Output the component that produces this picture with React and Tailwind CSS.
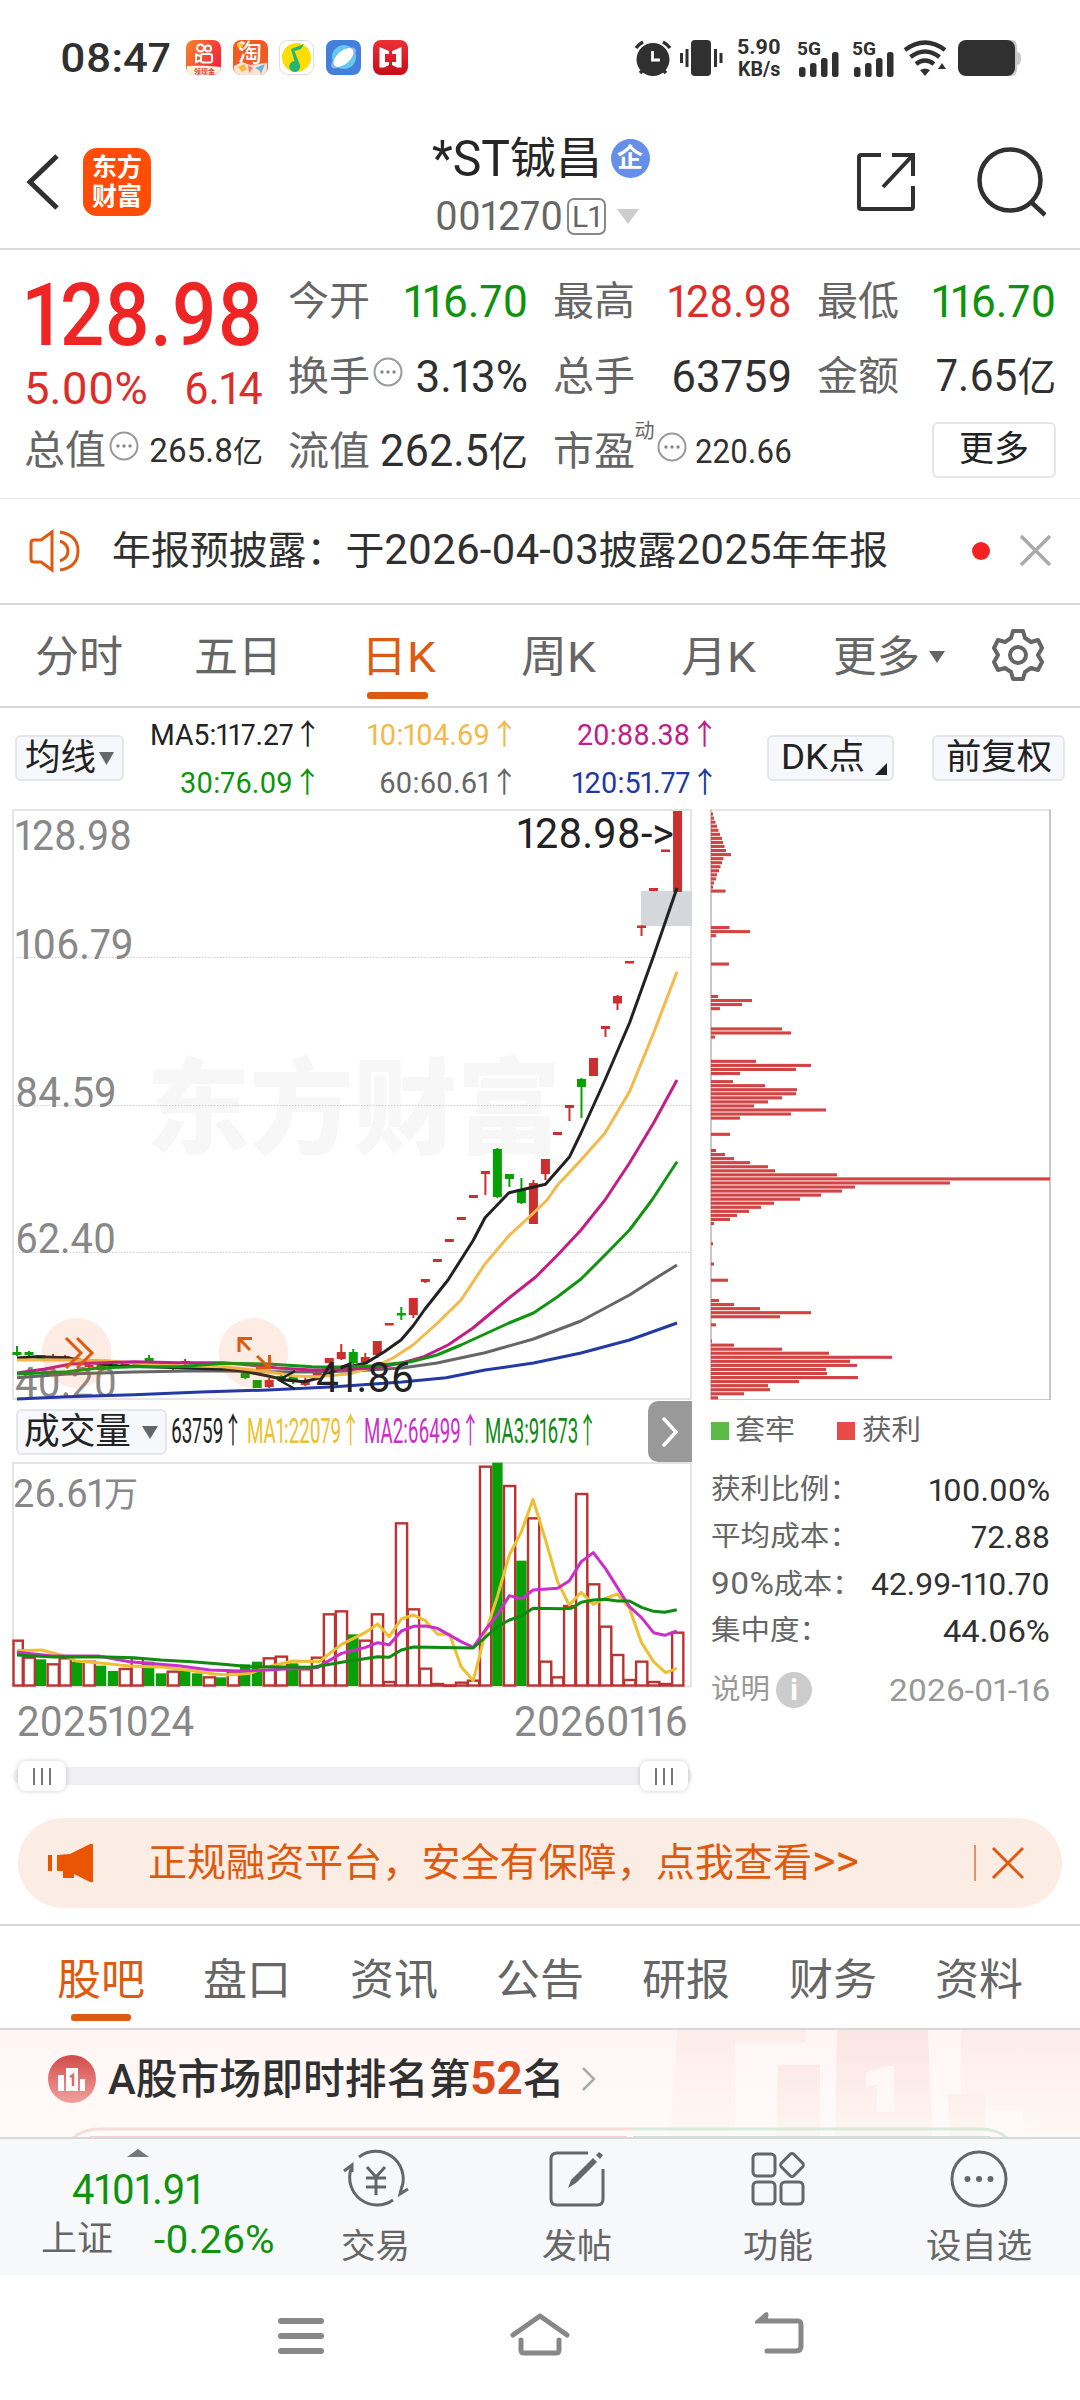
import { useLayoutEffect, useRef } from "react";

// one line of text squeezed or stretched to the given width
function Fit({ w, className = "", children }) {
  const ref = useRef(null);
  useLayoutEffect(() => {
    const el = ref.current;
    el.style.transform = `scaleX(${w / el.offsetWidth})`;
  }, [w, children]);
  return (
    <span className={`inline-block shrink-0 whitespace-nowrap ${className}`} style={{ width: w }}>
      <span ref={ref} className="inline-block origin-left">{children}</span>
    </span>
  );
}

const line = (points) => points.map((p) => p.join(",")).join(" ");

function StatusBar() {
  return (
    <div className="status h-[116px] flex items-center justify-between pl-[60px] pr-[58px]">
      <div className="flex items-center">
        <Fit w={111} className="text-[41px] leading-[50px] font-medium text-[#303030]">08:47</Fit>
        <svg className="ml-[15px] w-[222px] h-[35px]" viewBox="0 0 222 35">
          <defs>
            <linearGradient id="kwai" x1="0" x2="1" y2="0.5"><stop stopColor="#f8862c" /><stop offset="1" stopColor="#f4293c" /></linearGradient>
            <linearGradient id="hong" x2="0" y2="1"><stop stopColor="#ee2f38" /><stop offset="1" stopColor="#c80d18" /></linearGradient>
          </defs>
          <rect width="35" height="35" rx="8" fill="url(#kwai)" />
          <path d="M1 26 Q17 25 35 27 Q34 35 27 35 H8 Q2 35 1 30Z" fill="#fff3e2" />
          <text x="8" y="33.500" fontSize="7" fontWeight="700" fill="#e8432c">领现金</text>
          <g fill="none" stroke="#fff" strokeWidth="2"><circle cx="14.500" cy="8" r="3.500" /><circle cx="22" cy="8.500" r="3" /><rect x="15" y="14" width="11" height="8.500" rx="2" /><path d="M14 16 L10 14.500 V22 L14 20.500" /></g>
          <g transform="translate(47)">
            <rect width="35" height="35" rx="8" fill="#f15a22" />
            <circle cx="7" cy="5" r="3" fill="#ffc830" />
            <text x="5" y="21" fontSize="24" fontWeight="500" fill="#fff">淘</text>
            <path d="M1 26 L9 22 L17 25 L34 23 V28 Q34 35 27 35 H8 Q1 35 1 28Z" fill="#fbe5d2" />
            <path d="M5 27 L11 24 L14 29 L9 32Z" fill="#f6b93e" /><path d="M15 25 L20 28 L16 33Z" fill="#ef8078" /><path d="M22 28 L32 24 L28 34 L26 30Z" fill="#67b4e6" />
          </g>
          <g transform="translate(93)">
            <rect x=".5" y=".5" width="34" height="34" rx="8" fill="#fff" stroke="#dcdcdc" />
            <circle cx="17.500" cy="17.500" r="14.500" fill="#fedd05" />
            <path d="M12 9 L25 4 L22 9 L15.500 11 L21 25 A5.500 5.500 0 1 1 15.500 21Z" fill="#22b573" />
          </g>
          <g transform="translate(140)">
            <rect width="35" height="35" rx="8" fill="#457fdc" />
            <circle cx="18" cy="17" r="12" fill="#64c8f0" />
            <ellipse cx="17.500" cy="18" rx="15" ry="6" fill="#8fb6ee" transform="rotate(-38 17.500 18)" />
            <ellipse cx="17.500" cy="17.500" rx="12" ry="6.500" fill="#fff" transform="rotate(-42 17.500 17.500)" />
          </g>
          <g transform="translate(187)">
            <rect width="35" height="35" rx="8" fill="url(#hong)" />
            <path d="M6.500 7 L16 11 V14 H12 V22 H16 V25 L11 27.500 H6.500Z M28.500 7 L19 11 V14 H23 V22 H19 V25 L24 27.500 H28.500Z" fill="#fff" />
          </g>
        </svg>
      </div>
      <div className="flex items-center text-[#303030]">
        <svg className="w-[90px] h-[38px]" viewBox="0 0 90 38" fill="currentColor">
          <circle cx="19" cy="20.500" r="16.500" />
          <path d="M6 34 L10 30 M32 34 L28 30 M2 9 Q5 5 9 3 M36 9 Q33 5 29 3" stroke="currentColor" strokeWidth="3.500" />
          <path d="M18.500 12 V21 H26" stroke="#fff" strokeWidth="2.800" fill="none" />
          <rect x="57" y="1" width="20" height="36" rx="4" />
          <path d="M47.500 14 V24 M53 10 V28 M81.500 10 V28 M87 14 V24" stroke="currentColor" strokeWidth="3" />
        </svg>
        <div className="ml-[13px] mr-[4px] w-[44px] flex flex-col items-center text-[21px] leading-[22px] font-bold">
          <Fit w={44}>5.90</Fit>
          <Fit w={42}>KB/s</Fit>
        </div>
        {[0, 1].map((i) => (
          <svg key={i} className="ml-[12px] w-[43px] h-[38px] overflow-visible" viewBox="0 0 43 38" fill="currentColor">
            <text x="0" y="16" fontSize="19" fontWeight="700" textLength="24" lengthAdjust="spacingAndGlyphs">5G</text>
            <rect x="2" y="28" width="6.500" height="10" rx="2.500" /><rect x="13" y="24" width="6.500" height="14" rx="2.500" /><rect x="24" y="19" width="6.500" height="19" rx="2.500" /><rect x="35" y="13" width="6.500" height="25" rx="2.500" />
          </svg>
        ))}
        <svg className="ml-[8px] w-[44px] h-[38px]" viewBox="0 0 44 38" fill="none" stroke="currentColor" strokeWidth="4.500">
          <path d="M2 11 Q22 -4 42 11 M7.500 18 Q22 7 36.500 18 M13 25 Q22 18 31 25" />
          <path d="M17 31 Q22 28 27 31 L22 37Z M35 30 L39 24 L43 30Z" fill="currentColor" stroke="none" />
        </svg>
        <svg className="ml-[11px] w-[64px] h-[38px]" viewBox="0 0 64 38">
          <path d="M40 1 H54 Q59 2 59 8 V13 L62 14 Q64 19 62 25 L59 26 V30 Q59 36 54 37 H40Z" fill="#c8c8c8" />
          <rect y="1" width="57" height="36" rx="8" fill="#303030" />
        </svg>
      </div>
    </div>
  );
}

function Header() {
  return (
    <div className="header h-[134px] flex items-center justify-between border-b-2 border-[#dcdcdc] pl-[26px] pr-[34px]">
      <div className="flex items-center w-[300px]">
        <svg className="w-[34px] h-[56px]" viewBox="0 0 34 56" fill="none" stroke="#303030" strokeWidth="5"><path d="M31 2 L4 28 L31 54" /></svg>
        <div className="ml-[23px] w-[68px] h-[68px] rounded-[14px] bg-[#ff4c06] text-white font-bold text-[25px] leading-[29px] flex flex-col items-center justify-center">
          <span>东方</span>
          <span>财富</span>
        </div>
      </div>
      <div className="flex flex-col items-center h-full pt-[15px]">
        <div className="flex items-center h-[56px] ml-[9px]">
          <Fit w={78} className="text-[50px] leading-[56px] text-[#262626]">*ST</Fit>
          <Fit w={92} className="text-[44px] leading-[56px] text-[#262626]">铖昌</Fit>
          <span className="ml-[9px] w-[39px] h-[39px] rounded-full bg-[#668fea] text-white font-bold text-[26px] leading-[38px] text-center">企</span>
        </div>
        <div className="flex items-center h-[56px] ml-[3px] mt-[2px] text-[#666]">
          <Fit w={128} className="text-[40px] leading-[44px]">001270</Fit>
          <span className="ml-[4px] w-[39px] h-[37px] rounded-[7px] border-2 border-[#888] text-[29px] leading-[34px] flex justify-center"><Fit w={29}>L1</Fit></span>
          <svg className="ml-[10px] w-[24px] h-[16px]" viewBox="0 0 24 16"><path d="M1 0 H23 L12 15Z" fill="#ccc" /></svg>
        </div>
      </div>
      <div className="flex items-center justify-end w-[300px] gap-[60px]">
        <svg className="w-[60px] h-[60px]" viewBox="0 0 60 60" fill="none" stroke="#303030" strokeWidth="4"><path d="M25 3 H5 Q3 3 3 5 V55 Q3 57 5 57 H55 Q57 57 57 55 V34 M36 3 H57 V24 M57 3 L27 35" /></svg>
        <svg className="w-[70px] h-[70px]" viewBox="0 0 70 70" fill="none" stroke="#303030" strokeWidth="4.500"><circle cx="34" cy="33" r="30.500" /><path d="M54 54 L69 68" /></svg>
      </div>
    </div>
  );
}

function Dots() {
  return (
    <svg className="w-[30px] h-[30px] -mt-[10px] ml-[3px]" viewBox="0 0 30 30">
      <circle cx="15" cy="15" r="13.500" fill="none" stroke="#999" strokeWidth="2" />
      <g fill="#888"><circle cx="9" cy="15" r="1.700" /><circle cx="15" cy="15" r="1.700" /><circle cx="21" cy="15" r="1.700" /></g>
    </svg>
  );
}

function Quote({ name, value, w, color = "text-[#303030]", size = "text-[44px]", dots, sup }) {
  return (
    <div className="h-[75px] flex items-center justify-between">
      <div className="flex items-center">
        <Fit w={82} className="text-[40px] leading-[50px] text-[#666]">{name}</Fit>
        {sup && <span className="-mt-[42px] text-[20px] leading-[22px] text-[#666] -mr-[1px]">{sup}</span>}
        {dots && <Dots />}
      </div>
      <Fit w={w} className={`leading-[50px] ${size} ${color}`}>{value}</Fit>
    </div>
  );
}

function QuotePanel() {
  return (
    <div className="quotes h-[249px] border-b border-[#e8e8e8] grid grid-cols-4 gap-x-[25px] px-[24px]">
      <div className="pt-[20px]">
        <Fit w={239} className="text-[87px] h-[88px] leading-[90px] font-medium text-[#ee2524]">128.98</Fit>
        <div className="h-[62px] flex items-center justify-between text-[44px] leading-[50px] text-[#dc2d2b]">
          <Fit w={124}>5.00%</Fit>
          <Fit w={79}>6.14</Fit>
        </div>
        <div className="-mt-[6px]">
          <Quote name="总值" value={<>265.8<span className="text-[30px]">亿</span></>} w={114} size="text-[33px]" dots />
        </div>
      </div>
      <div className="pt-[15px]">
        <Quote name="今开" value="116.70" w={124} color="text-[#0f930f]" />
        <Quote name="换手" value="3.13%" w={112} dots />
        <Quote name="流值" value={<>262.5<span className="text-[40px]">亿</span></>} w={148} />
      </div>
      <div className="pt-[15px]">
        <Quote name="最高" value="128.98" w={124} color="text-[#dc2d2b]" />
        <Quote name="总手" value="63759" w={121} />
        <Quote name="市盈" value="220.66" w={97} size="text-[33px]" sup="动" dots />
      </div>
      <div className="pt-[15px]">
        <Quote name="最低" value="116.70" w={124} color="text-[#0f930f]" />
        <Quote name="金额" value={<>7.65<span className="text-[40px]">亿</span></>} w={120} />
        <div className="h-[70px] flex items-center justify-end">
          <div className="w-[124px] h-[56px] rounded-md border-2 border-[#e6e6e6] text-[35px] leading-[52px] text-center text-[#222]">更多</div>
        </div>
      </div>
    </div>
  );
}

function Notice() {
  return (
    <div className="notice h-[106px] flex items-center border-b-2 border-[#d8d8d8] pl-[29px] pr-[29px]">
      <svg className="w-[52px] h-[44px]" viewBox="0 0 52 44" fill="none" stroke="#dd5a10" strokeWidth="3"><path d="M23 3 V41 L12 33 H5 Q2 33 2 30 V14 Q2 11 5 11 H12 Z M31 12 Q39 15 39 22 Q39 29 31 32 M31 3 Q49 6 49 22 Q49 38 31 41" /></svg>
      <Fit w={776} className="ml-[31px] text-[39px] leading-[54px] text-[#303030]">
        年报预披露：于<span className="text-[42px]">2026-04-03</span>披露<span className="text-[42px]">2025</span>年年报
      </Fit>
      <span className="ml-auto w-[18px] h-[18px] rounded-full bg-[#f32323]"></span>
      <svg className="ml-[30px] w-[31px] h-[31px]" viewBox="0 0 31 31" stroke="#aaa" strokeWidth="3.500"><path d="M1 1 L30 30 M30 1 L1 30" /></svg>
    </div>
  );
}

function PeriodTabs() {
  return (
    <div className="tabs h-[104px] flex items-center border-b-2 border-[#d8d8d8] pt-[3px] text-[43px] leading-[56px] text-[#666]">
      <Fit w={88} className="ml-[35px]">分时</Fit>
      <Fit w={88} className="ml-[71px]">五日</Fit>
      <div className="relative ml-[79px] text-[#dd5a10]">
        <Fit w={75}>日K</Fit>
        <span className="absolute left-[6px] top-[63px] w-[61px] h-[7px] rounded-[3px] bg-[#dd5a10]"></span>
      </div>
      <Fit w={75} className="ml-[85px]">周K</Fit>
      <Fit w={75} className="ml-[85px]">月K</Fit>
      <Fit w={87} className="ml-[77px]">更多</Fit>
      <svg className="ml-[9px] w-[16px] h-[12px]" viewBox="0 0 16 12"><path d="M0 0 H16 L8 12Z" fill="#666" /></svg>
      <svg className="ml-[46px] -mt-[3px] w-[54px] h-[54px]" viewBox="0 0 54 54" fill="none" stroke="#666" strokeWidth="4" strokeLinejoin="round">
        <path d="M22 3 H32 L34 10 L40 14 L47 12 L51 20 L47 27 L51 34 L47 42 L40 40 L34 44 L32 51 H22 L20 44 L14 40 L7 42 L3 34 L7 27 L3 20 L7 12 L14 14 L20 10Z" />
        <circle cx="27" cy="27" r="8" />
      </svg>
    </div>
  );
}

function Averages() {
  return (
    <div className="averages h-[100px] flex items-center pl-[15px] pr-[15px]">
      <div className="w-[109px] h-[46px] rounded-md border-2 border-[#e4e6ea] bg-[#f6f8fb] flex items-center pl-[8px] text-[36px] leading-[42px] text-[#222]">
        <Fit w={71}>均线</Fit>
        <svg className="ml-[3px] w-[15px] h-[13px]" viewBox="0 0 15 13"><path d="M0 0 H15 L7.500 13Z" fill="#666" /></svg>
      </div>
      <div className="ml-[29px] w-[567px] grid grid-cols-[169px_197px_200px] justify-items-end text-[29px] leading-[48px] mt-[2px]">
        <Fit w={172} className="text-[#222]">MA5:117.27↑</Fit>
        <Fit w={152} className="text-[#f3b94a]">10:104.69↑</Fit>
        <Fit w={142} className="text-[#c31d86]">20:88.38↑</Fit>
        <Fit w={142} className="text-[#0f930f]">30:76.09↑</Fit>
        <Fit w={140} className="text-[#666]">60:60.61↑</Fit>
        <Fit w={147} className="text-[#21399f]">120:51.77↑</Fit>
      </div>
      <div className="relative ml-auto w-[127px] h-[46px] rounded-md border-2 border-[#e4e6ea] bg-[#f6f8fb] text-[35px] leading-[42px] pl-[12px] text-[#222]">
        <Fit w={84}>DK点</Fit>
        <svg className="absolute right-[5px] bottom-[4px] w-[12px] h-[12px]" viewBox="0 0 12 12"><path d="M12 0 V12 H0Z" fill="#222" /></svg>
      </div>
      <div className="ml-[38px] w-[133px] h-[46px] rounded-md border-2 border-[#e4e6ea] bg-[#f6f8fb] text-[35px] leading-[42px] text-center text-[#222]"><Fit w={106}>前复权</Fit></div>
    </div>
  );
}

const RED = "#cb2f2e";
const GREEN = "#07a007";
const barX = (i) => 17 + i * 12.01;

// [index, color, body top, body bottom, wick top, wick bottom]
const candles = [
  [0, GREEN, 1352, 1355, 1346, 1356], [1, GREEN, 1352, 1355, 1351, 1356], [2, GREEN, 1355, 1359], [3, RED, 1356, 1358, 1354, 1360], [4, RED, 1356, 1358, 1355, 1359],
  [5, GREEN, 1359, 1361], [6, RED, 1365, 1367, 1363, 1369], [7, GREEN, 1365, 1370], [8, GREEN, 1364, 1367], [9, RED, 1363, 1365], [10, GREEN, 1363, 1365],
  [11, GREEN, 1358, 1361, 1355, 1362], [12, GREEN, 1363, 1366], [13, RED, 1366, 1368, 1364, 1370], [14, RED, 1361, 1363, 1359, 1365], [15, GREEN, 1366, 1369],
  [16, GREEN, 1367, 1369], [17, RED, 1368, 1370], [18, GREEN, 1368, 1370], [19, GREEN, 1371, 1378, 1370, 1379], [20, GREEN, 1380, 1388], [21, RED, 1380, 1387, 1378, 1388],
  [22, GREEN, 1376, 1378, 1373, 1380], [23, GREEN, 1376, 1382, 1375, 1384], [24, RED, 1380, 1385, 1377, 1386], [25, RED, 1373, 1377], [26, RED, 1358, 1363],
  [27, RED, 1352, 1359, 1344, 1360], [28, GREEN, 1352, 1363, 1349, 1364], [29, RED, 1357, 1362, 1353, 1362], [30, RED, 1341, 1355, 1341, 1358], [31, RED, 1323, 1325.5],
  [32, GREEN, 1313, 1315.5, 1307, 1320], [33, RED, 1298, 1315, 1298, 1318], [34, RED, 1279, 1282, 1279, 1283], [35, RED, 1259, 1262], [36, RED, 1239, 1242], [37, RED, 1217, 1220],
  [38, RED, 1195, 1198], [39, RED, 1171, 1174, 1171, 1195], [40, GREEN, 1149, 1197, 1148, 1198], [41, GREEN, 1174, 1179, 1174, 1187], [42, GREEN, 1189, 1203, 1178, 1204],
  [43, RED, 1183, 1224, 1180, 1224], [44, RED, 1159, 1174, 1159, 1180], [45, RED, 1132, 1135], [46, RED, 1105, 1108, 1105, 1121], [47, GREEN, 1079, 1087, 1078, 1118],
  [48, RED, 1058, 1076], [49, RED, 1026, 1029, 1026, 1037], [50, RED, 996, 1003.5, 995, 1010], [51, RED, 961, 963.5], [52, RED, 925.5, 928, 925.5, 936],
  [53, RED, 888, 891], [54, RED, 849.5, 852], [55, RED, 811, 892],
];

const averages = [
  ["#2439a4", [[17, 1399], [67, 1396.7], [134, 1394.7], [201, 1392], [268, 1390], [335, 1386.7], [402, 1382], [446, 1377.7], [485, 1370], [533.5, 1363], [581, 1353], [629.5, 1340], [677, 1323]]],
  ["#666", [[17, 1377.7], [67, 1374], [134, 1372], [201, 1370.7], [268, 1371.7], [312, 1372], [357, 1370.7], [402, 1368], [437, 1363], [485, 1352.7], [533.5, 1339], [581, 1321], [629.5, 1295], [656, 1278], [677, 1265]]],
  ["#222", [[17, 1358], [36, 1356.7], [67, 1357.7], [89, 1361.7], [112, 1365.7], [149, 1366.7], [179, 1367.7], [223, 1369.3], [243, 1371], [268, 1376], [286, 1380], [304, 1381.7], [319, 1378], [339, 1369], [366, 1363], [384, 1352], [401, 1340], [413, 1326], [425, 1309], [448, 1280], [473, 1240.7], [485, 1217.7], [502, 1200], [509, 1192.7], [545.5, 1184.3], [569.6, 1156.7], [581, 1133], [605, 1080], [629.5, 1023], [653.6, 956], [677, 888]]],
  ["#f3b94a", [[17, 1360], [67, 1360], [107, 1360.7], [134, 1363], [179, 1365.7], [223, 1366.7], [268, 1371.7], [295, 1376], [317, 1376.7], [348, 1374], [375, 1366.7], [393, 1358], [413, 1345], [437.5, 1323], [461, 1300], [485, 1264], [509, 1235.7], [533.5, 1213], [547, 1200], [557.6, 1185], [581, 1160], [605, 1133], [629.5, 1091.7], [653.6, 1033], [677, 971.7]]],
  ["#c31d86", [[17, 1373], [45, 1369], [71, 1364], [103, 1362.7], [134, 1361.7], [179, 1362.7], [223, 1362.7], [250, 1365], [277, 1368], [312, 1370], [348, 1369], [375, 1368], [402, 1363], [424, 1356.7], [448, 1345], [473, 1328], [509, 1298], [536, 1276.7], [557.6, 1255], [581, 1230], [605, 1200], [629.5, 1163], [653.6, 1123], [677, 1080]]],
  ["#119411", [[17, 1374], [67, 1371.7], [98, 1368], [134, 1366.7], [179, 1366.7], [223, 1363.3], [268, 1364], [312, 1366.7], [339, 1367], [375, 1365.7], [411, 1361.7], [437, 1355], [461, 1345], [485, 1334], [509, 1323], [533.5, 1313], [557.6, 1296.7], [581, 1279], [605, 1255], [629.5, 1230], [652, 1200], [677, 1161.7]]],
];

const priceLabels = [["128.98", 850, 117], ["106.79", 959, 119], ["84.59", 1107, 102], ["62.40", 1253, 101], ["40.20", 1397, 102]];

function KLine() {
  return (
    <svg className="block w-[679px] h-[592px] overflow-visible" viewBox="13 809 679 592">
      <text x="146" y="1146" fontSize="104" fontWeight="900" fill="#f7f7f7" textLength="415">东方财富</text>
      <path d="M13 957.500 H691 M13 1105.500 H691 M13 1252.500 H691" stroke="#cfcfcf" strokeDasharray="1.500 1.500" />
      <rect x="13" y="810" width="678" height="589" fill="none" stroke="#e4e4e4" strokeWidth="2" />
      <rect x="641" y="891" width="51" height="35" fill="#d4d8dd" />
      <g fontSize="42" fill="#888">
        {priceLabels.map(([label, y, w]) => (
          <text key={label} x="15" y={y} textLength={w} lengthAdjust="spacingAndGlyphs">{label}</text>
        ))}
      </g>
      {candles.map(([i, color, top, bottom, high, low]) => (
        <g key={i} fill={color}>
          <rect x={barX(i) - 4.5} y={top} width="9" height={bottom - top} />
          {high && <rect x={barX(i) - 1} y={high} width="2" height={low - high} />}
        </g>
      ))}
      {averages.map(([color, points]) => (
        <polyline key={color} points={line(points)} fill="none" stroke={color} strokeWidth="3" strokeLinejoin="round" />
      ))}
      <g fill="#222" fontSize="42">
        <text x="517" y="848" textLength="157" lengthAdjust="spacingAndGlyphs">128.98-&gt;</text>
        <text x="316" y="1392" textLength="98" lengthAdjust="spacingAndGlyphs">41.86</text>
      </g>
      <path d="M295 1371 L279 1380 L295 1389 M279 1380 H291" fill="none" stroke="#222" strokeWidth="2.500" />
      <circle cx="76.500" cy="1353" r="35" fill="#f06a28" fillOpacity=".13" />
      <circle cx="253.500" cy="1353" r="35" fill="#f06a28" fillOpacity=".13" />
      <g fill="none" stroke="#dd5a10" strokeWidth="3">
        <path d="M66 1338 L81 1353 L66 1368 M77 1338 L92 1353 L77 1368" />
        <path d="M239 1352 V1338.500 H252 M239 1338.500 L250 1350 M269.500 1355 V1368 H256 M269.500 1368 L257 1356" />
      </g>
    </svg>
  );
}

// bar tops measured on the plot's own 3x grid, base at 858
const volumes = [
  722, 773, -778, 793, 775, -785, 785, -797, -813, 807, 775, -785, -820, 815, -812, -820, 832, -832, 815, -793, -785, 775, 770, -790, 808, 773, 643, 634,
  -703, 722, 643, 846, 370, 628, 806, 852, 856, 848, 842, 200, -188, 258, -482, 355, 785, 832, 618, 282, 553, 680, 765, 840, 785, 846, 852, 698,
];
const volumeLines = [
  ["#ecc02e", [[38, 752], [93, 750], [150, 770], [170, 783], [230, 790], [290, 798], [370, 802], [430, 812], [480, 822], [515, 825], [560, 820], [600, 800], [657, 783], [715, 785], [765, 733], [819, 697], [846, 672], [872, 710], [899, 657], [926, 645], [953, 662], [980, 703], [1007, 703], [1033, 800], [1060, 842], [1087, 700], [1114, 590], [1141, 465], [1168, 395], [1194, 298], [1222, 420], [1249, 545], [1275, 615], [1302, 577], [1329, 613], [1356, 595], [1383, 582], [1410, 625], [1437, 728], [1464, 785], [1491, 818], [1516, 805]]],
  ["#cb2fcb", [[38, 757], [120, 768], [220, 768], [290, 785], [400, 797], [470, 810], [540, 813], [600, 810], [650, 806], [710, 803], [765, 760], [819, 742], [846, 728], [872, 734], [899, 693], [926, 679], [953, 678], [980, 685], [1033, 725], [1060, 742], [1087, 690], [1114, 645], [1141, 587], [1168, 597], [1194, 570], [1249, 565], [1275, 543], [1302, 485], [1329, 458], [1356, 505], [1410, 620], [1437, 653], [1464, 698], [1489, 706], [1516, 693]]],
  ["#118a11", [[38, 765], [120, 771], [220, 770], [300, 773], [360, 780], [430, 785], [500, 793], [560, 800], [700, 802], [765, 787], [846, 770], [872, 772], [899, 750], [926, 741], [1060, 744], [1087, 712], [1114, 680], [1141, 660], [1168, 648], [1194, 625], [1260, 626], [1280, 625], [1302, 607], [1329, 600], [1356, 598], [1383, 603], [1410, 603], [1437, 622], [1464, 634], [1489, 637], [1516, 629]]],
];

function Volume() {
  return (
    <svg className="block w-[679px] h-[226px] overflow-visible" viewBox="13 1462 679 226">
      <rect x="13" y="1463" width="678" height="223.500" fill="none" stroke="#e4e4e4" strokeWidth="2" />
      <text x="13" y="1507" fontSize="39" fill="#888" textLength="125" lengthAdjust="spacingAndGlyphs">26.61<tspan fontSize="35">万</tspan></text>
      {volumes.map((v, i) => {
        const y = 1400 + Math.abs(v) / 3;
        return v < 0 ? (
          <rect key={i} x={barX(i) - 5.2} y={y} width="10.400" height={1686 - y} fill={GREEN} />
        ) : (
          <rect key={i} x={barX(i) - (i ? 5.4 : 3.5)} y={y} width={i ? 11.2 : 9.3} height={Math.max(1685.5 - y, 0.5)} fill="none" stroke="#b93432" strokeWidth="2.400" />
        );
      })}
      {volumeLines.map(([color, points]) => (
        <polyline key={color} points={line(points.map(([x, y]) => [x / 2.24, 1400 + y / 3]))} fill="none" stroke={color} strokeWidth="3" strokeLinejoin="round" />
      ))}
    </svg>
  );
}

// [slot, length] of every price level holding shares
const chips = [
  [0, 2], [1, 3], [2, 4.5], [3, 6], [4, 7.5], [5, 9], [6, 11], [7, 12], [8, 13.5], [9, 15], [10, 20], [11, 12.5], [12, 11], [13, 9.5], [14, 8], [15, 6], [16, 5], [17, 3], [18, 2], [19, 14.5],
  [28, 18.5], [29, 39], [30, 5], [37, 18], [45, 7], [46, 41], [47, 31], [48, 9], [53, 71], [54, 80], [55, 4], [61, 45], [62, 100], [63, 85], [64, 29],
  [66, 22], [67, 54], [68, 86], [69, 85], [70, 71], [71, 57], [72, 43], [73, 115], [74, 80], [75, 29], [79, 19],
  [83, 5], [84, 14], [85, 23], [86, 39], [87, 57], [88, 64], [89, 126], [90, 339], [91, 239], [92, 144], [93, 131], [94, 110], [95, 89], [96, 63], [97, 50], [98, 38], [99, 26], [100, 19], [101, 3],
  [106, 2], [111, 3], [115, 17], [120, 8], [121, 23], [122, 49], [123, 100], [124, 69], [126, 5],
  [130, 1], [131, 23], [132, 71], [133, 118], [134, 181], [135, 139], [136, 146], [137, 115], [138, 116], [139, 147], [140, 88], [141, 57], [142, 59], [143, 33], [144, 7],
];

function ChipProfile() {
  return (
    <svg className="block w-[341px] h-[591px]" viewBox="710 809 341 591">
      <path d="M711 810 H1050 M711 1399.500 H1050" stroke="#ccc" />
      <path d="M711 809.500 V1400 M1050 809.500 V1400" stroke="#c8c8c8" strokeWidth="2" />
      {chips.map(([k, w]) => (
        <rect key={k} x="711" y={812.5 + k * 4.054} width={w} height="3.100" fill="#d24444" />
      ))}
    </svg>
  );
}

function CostRow({ label, value, lw, vw }) {
  return (
    <div className="h-[47px] flex items-center justify-between">
      <Fit w={lw} className="text-[28px] leading-[40px] text-[#666]">{label}</Fit>
      <Fit w={vw} className="text-[32px] leading-[40px] text-[#303030]">{value}</Fit>
    </div>
  );
}

function Charts() {
  return (
    <div className="charts h-[1010px] flex pl-[13px]">
      <div className="w-[679px] h-[1000px] pt-[1px]">
        <KLine />
        <div className="h-[61px] flex items-center pl-[3px]">
          <div className="w-[151px] h-[46px] mt-[1px] rounded-md border-2 border-[#e4e6ea] bg-[#f6f8fb] flex items-center pl-[6px] text-[36px] leading-[42px] text-[#222]">
            <Fit w={107}>成交量</Fit>
            <svg className="ml-[11px] w-[16px] h-[13px]" viewBox="0 0 16 13"><path d="M0 0 H16 L8 13Z" fill="#666" /></svg>
          </div>
          <div className="flex text-[35px] leading-[46px] ml-[4px] mt-[1px]">
            <Fit w={71} className="text-[#222]">63759↑</Fit>
            <Fit w={113} className="ml-[5px] text-[#ecc02e]">MA1:22079↑</Fit>
            <Fit w={116} className="ml-[4px] text-[#cb2fcb]">MA2:66499↑</Fit>
            <Fit w={112} className="ml-[5px] text-[#118a11]">MA3:91673↑</Fit>
          </div>
          <div className="ml-auto w-[44px] h-[61px] rounded-l-[10px] bg-[#999] flex items-center justify-center">
            <svg className="w-[18px] h-[30px]" viewBox="0 0 18 30" fill="none" stroke="#fff" strokeWidth="3.500" strokeLinecap="round"><path d="M3 2 L15 15 L3 28" /></svg>
          </div>
        </div>
        <Volume />
        <div className="h-[67px] flex items-center justify-between pl-[4px] pr-[4px] text-[42px] leading-[50px] text-[#888]">
          <Fit w={177}>20251024</Fit>
          <Fit w={174}>20260116</Fit>
        </div>
        <div className="h-[42px] flex items-center">
          <div className="w-[679px] h-[18px] rounded-full bg-[#f0f0f3] flex items-center justify-between pl-[5px] pr-[4px]">
            {[0, 1].map((i) => (
              <div key={i} className="w-[48px] h-[30px] rounded-lg bg-white shadow-[0_0_5px_rgba(0,0,0,0.2)] flex items-center justify-center gap-[6px]">
                <i className="w-[2px] h-[17px] bg-[#777]"></i>
                <i className="w-[2px] h-[17px] bg-[#777]"></i>
                <i className="w-[2px] h-[17px] bg-[#777]"></i>
              </div>
            ))}
          </div>
        </div>
      </div>
      <div className="ml-[18px] w-[341px] pt-[1px]">
        <ChipProfile />
        <div className="h-[65px] pb-[4px] flex items-center text-[28px] leading-[40px] text-[#666]">
          <span className="ml-[1px] w-[18px] h-[18px] bg-[#5bb947]"></span>
          <Fit w={60} className="ml-[6px]">套牢</Fit>
          <span className="ml-[42px] w-[18px] h-[18px] bg-[#e84a47]"></span>
          <Fit w={59} className="ml-[7px]">获利</Fit>
        </div>
        <div className="pl-[1px] pr-[1px] pt-[1px]">
          <CostRow label="获利比例：" value="100.00%" lw={148} vw={121} />
          <CostRow label="平均成本：" value="72.88" lw={148} vw={79} />
          <CostRow label={<><span className="text-[32px]">90%</span>成本：</>} value="42.99-110.70" lw={150} vw={179} />
          <CostRow label="集中度：" value="44.06%" lw={118} vw={107} />
          <div className="h-[72px] flex items-center text-[#999]">
            <Fit w={59} className="text-[28px] leading-[40px]">说明</Fit>
            <span className="ml-[6px] w-[36px] h-[36px] rounded-full bg-[#ccc] text-white font-bold text-[29px] leading-[36px] text-center">i</span>
            <Fit w={161} className="ml-auto text-[32px] leading-[40px]">2026-01-16</Fit>
          </div>
        </div>
      </div>
    </div>
  );
}

function Banner() {
  return (
    <div className="h-[109px] border-b-2 border-[#d8d8d8]">
      <div className="mx-[18px] h-[90px] rounded-full bg-[#fcede4] flex items-center pl-[30px] pr-[37px] text-[#dd5a10]">
        <svg className="w-[46px] h-[40px]" viewBox="0 0 46 40" fill="#ea5504"><path d="M0 12 H4 V28 H0Z M9 12 L22 11 L42 1 H45 V39 H42 L26 31 V35 H15 V28 H9Z" /></svg>
        <Fit w={711} className="ml-[54px] text-[39px] leading-[54px]">正规融资平台，安全有保障，点我查看<span className="text-[45px] leading-[40px]">&gt;&gt;</span></Fit>
        <span className="ml-auto w-[2px] h-[36px] bg-[#e8935f]"></span>
        <svg className="ml-[15px] w-[34px] h-[34px]" viewBox="0 0 34 34" stroke="#dd5a10" strokeWidth="3"><path d="M2 2 L32 32 M32 2 L2 32" /></svg>
      </div>
    </div>
  );
}

function SectionTabs() {
  const tabs = ["股吧", "盘口", "资讯", "公告", "研报", "财务", "资料"];
  return (
    <div className="h-[104px] flex items-center justify-between pt-[6px] pl-[57px] pr-[57px] border-b-2 border-[#d8d8d8] text-[43px] leading-[56px] text-[#666]">
      {tabs.map((t, i) => (
        <div key={t} className={i === 0 ? "relative text-[#dd5a10]" : ""}>
          <Fit w={88}>{t}</Fit>
          {i === 0 && <span className="absolute left-[14px] top-[62px] w-[60px] h-[7px] rounded-[3px] bg-[#dd5a10]"></span>}
        </div>
      ))}
    </div>
  );
}

function RankCard() {
  return (
    <div className="relative h-[109px] overflow-hidden bg-gradient-to-b from-[#fff6f4] to-[#fffaf8] border-b-2 border-[#d8d8d8]">
      <svg className="absolute left-0 top-0 w-[1080px] h-[109px]" viewBox="0 2030 1080 109">
        <defs>
          <linearGradient id="podium" x2="0" y2="1"><stop stopColor="#fbe5e3" /><stop offset="1" stopColor="#fef6f2" /></linearGradient>
          <linearGradient id="podiumBack" x2="0" y2="1"><stop stopColor="#fdedeb" /><stop offset="1" stopColor="#fff8f4" /></linearGradient>
        </defs>
        <path d="M677 2030 H806 V2042 H735 V2139 H670Z M961 2030 H1080 V2139 H1027 L1022 2110 H985 V2094 H961Z" fill="url(#podiumBack)" />
        <path d="M778 2065 H820 V2139 H776Z M837 2030 H928 L932 2139 H835Z M948 2094 H985 V2139 H950Z" fill="url(#podium)" />
        <path d="M866 2073 L886 2066 H894 V2112 H877 V2084 L866 2088Z" fill="#fff8f6" />
        <path d="M72 2139 Q82 2129 100 2129 H632" fill="none" stroke="#f8dedb" strokeWidth="3" />
        <path d="M632 2129 H980 Q998 2129 1008 2139" fill="none" stroke="#d9eade" strokeWidth="3" />
        <path d="M90 2137.500 H627" stroke="#f8d2cf" strokeWidth="3" />
        <path d="M633 2137.500 H990" stroke="#cfe7d6" strokeWidth="3" />
      </svg>
      <div className="relative flex items-center h-[98px] pl-[48px]">
        <svg className="w-[48px] h-[48px]" viewBox="0 0 48 48">
          <defs><linearGradient id="medal" x2="0" y2="1"><stop stopColor="#d44a4a" /><stop offset="1" stopColor="#f0a19d" /></linearGradient></defs>
          <circle cx="24" cy="24" r="24" fill="url(#medal)" />
          <path d="M10 20 H16 V36 H10Z M18 13 H30 V36 H18Z M32 24 H37 V36 H32Z" fill="#fff" />
          <path d="M22 22 L25 20 V31" fill="none" stroke="#dc6a68" strokeWidth="2.500" />
        </svg>
        <Fit w={457} className="ml-[12px] mt-[1px] text-[42px] leading-[56px] font-medium text-[#303030]">
          A股市场即时排名第<b className="text-[46px] leading-[40px] font-bold text-[#dd4a1c]">52</b>名
        </Fit>
        <svg className="ml-[17px] w-[14px] h-[24px]" viewBox="0 0 14 24" fill="none" stroke="#aaa" strokeWidth="2.500"><path d="M1 1 L12 12 L1 23" /></svg>
      </div>
    </div>
  );
}

function Action({ label, w, className, children }) {
  return (
    <div className={`flex flex-col items-center pt-[10px] ${className}`}>
      <svg className="w-[66px] h-[60px]" viewBox="0 0 66 60" fill="none" stroke="#666" strokeWidth="3">{children}</svg>
      <Fit w={w} className="mt-[13px] text-[34px] leading-[48px] text-[#666]">{label}</Fit>
    </div>
  );
}

function BottomBar() {
  return (
    <div className="h-[136px] bg-[#f6f8fa] flex">
      <div className="w-[275px] pl-[41px]">
        <svg className="mt-[10px] ml-[86px] w-[22px] h-[8px]" viewBox="0 0 22 8"><path d="M0 8 L11 0 L22 8Z" fill="#777" /></svg>
        <Fit w={131} className="block ml-[31px] mt-[8px] text-[42px] leading-[50px] text-[#0f930f]">4101.91</Fit>
        <div className="flex items-center justify-between h-[50px]">
          <Fit w={72} className="text-[35px] leading-[50px] text-[#666]">上证</Fit>
          <Fit w={121} className="text-[39px] leading-[50px] text-[#0f930f]">-0.26%</Fit>
        </div>
      </div>
      <div className="flex">
        <Action label="交易" w={69} className="w-[201px]">
          <path d="M16 8 A27.500 27.500 0 0 1 59 38 M50 51 A27.500 27.500 0 0 1 8 20 M1 22 L9 16 V23 M65 40 L57 45 L59 37" />
          <path d="M24 18 L33 28 L42 18 M33 28 V46 M23 29 H43 M23 38 H43" />
        </Action>
        <Action label="发帖" w={70} className="w-[201px]">
          <path d="M44 4 H13 Q7 4 7 10 V50 Q7 56 13 56 H53 Q59 56 59 50 V20" />
          <path d="M24 39 L27 31 L49 9 L53 13 L32 34Z M52 6 L55 3 L59 6 L56 10Z" fill="#666" stroke="none" />
        </Action>
        <Action label="功能" w={70} className="w-[201px]">
          <rect x="8" y="5" width="22" height="22" rx="4" /><rect x="8" y="33" width="22" height="22" rx="4" /><rect x="36" y="33" width="22" height="22" rx="4" />
          <path d="M45.500 5 Q47 4 48.500 5 L58 14.500 Q59 16 58 17.500 L48.500 27 Q47 28 45.500 27 L36 17.500 Q35 16 36 14.500Z" />
        </Action>
        <Action label="设自选" w={106} className="w-[202px]">
          <circle cx="33" cy="30" r="27" />
          <g fill="#666" stroke="none"><circle cx="21.500" cy="30" r="3" /><circle cx="33" cy="30" r="3" /><circle cx="44.500" cy="30" r="3" /></g>
        </Action>
      </div>
    </div>
  );
}

function NavKeys() {
  return (
    <div className="h-[125px] flex items-center justify-between pl-[278px] pr-[275px] pb-[5px]">
      <svg className="w-[46px] h-[46px]" viewBox="0 0 46 46" stroke="#888" strokeWidth="6" strokeLinecap="round"><path d="M3 9 H43 M3 24 H43 M3 39 H43" /></svg>
      <svg className="w-[60px] h-[46px]" viewBox="0 0 60 46" fill="none" stroke="#888" strokeWidth="5" strokeLinecap="round" strokeLinejoin="round"><path d="M3 23 L30 4 L57 23 M11 28 V38 Q11 41 14 41 H46 Q49 41 49 38 V28" /></svg>
      <svg className="w-[50px] h-[46px]" viewBox="0 0 50 46" fill="none" stroke="#888" strokeWidth="5" strokeLinecap="round"><path d="M11 3 L4 9 H43 Q46 9 46 13 V34 Q46 39 41 39 H12" /><path d="M3 9 L12 2 V9Z" fill="#888" strokeWidth="2" /></svg>
    </div>
  );
}

export default function App() {
  return (
    <div className="w-[1080px] h-[2400px] overflow-hidden bg-white flex flex-col font-['Roboto','Noto_Sans_CJK_SC',sans-serif] proportional-nums">
      <StatusBar />
      <Header />
      <QuotePanel />
      <Notice />
      <PeriodTabs />
      <Averages />
      <Charts />
      <Banner />
      <SectionTabs />
      <RankCard />
      <BottomBar />
      <NavKeys />
    </div>
  );
}
